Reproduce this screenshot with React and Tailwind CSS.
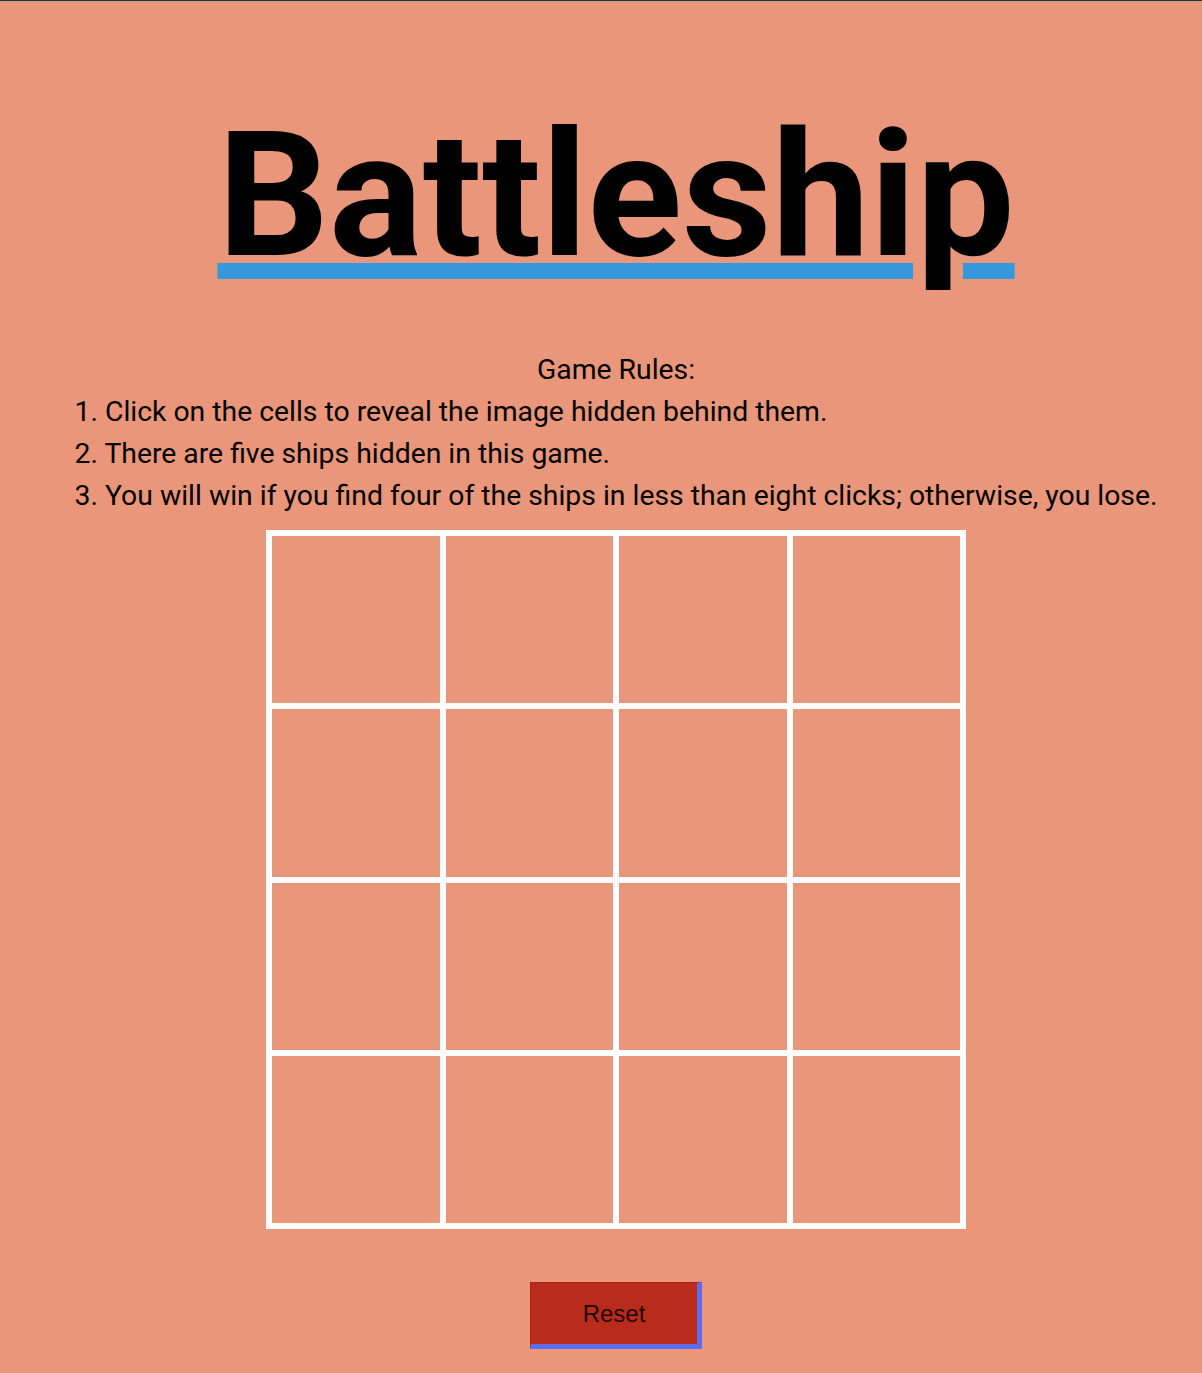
import React, { useState } from 'react';

const rules = [
  '1. Click on the cells to reveal the image hidden behind them.',
  '2. There are five ships hidden in this game.',
  '3. You will win if you find four of the ships in less than eight clicks; otherwise, you lose.',
];

const App = () => {
  const [revealed, setRevealed] = useState(Array(16).fill(false));

  const reveal = (i) => {
    const next = [...revealed];
    next[i] = true;
    setRevealed(next);
  };

  return (
    <div className="min-h-screen bg-[#e9967a] border-t border-[#0b3a4c] font-['Roboto',sans-serif] text-black">
      <div className="pl-[30px] pt-[92px] pb-[24px] flex flex-col items-center">
        {/* Title */}
        <h1 className="text-[175px] font-bold leading-[206px] underline decoration-[#3498db] decoration-[16px] underline-offset-[8px]">
          Battleship
        </h1>

        {/* Rules */}
        <div className="mt-[50px] text-[28.35px] leading-[42px]">
          <p className="text-center">Game Rules:</p>
          {rules.map((rule) => (
            <p key={rule}>{rule}</p>
          ))}
        </div>

        {/* Board */}
        <div className="mt-[13px] w-[700px] h-[699px] bg-white p-[6px] grid grid-cols-4 grid-rows-4 gap-[6px]">
          {revealed.map((r, i) => (
            <button
              key={i}
              onClick={() => reveal(i)}
              className={r ? 'bg-[#3498db]' : 'bg-[#e9967a]'}
            />
          ))}
        </div>

        <button
          onClick={() => setRevealed(Array(16).fill(false))}
          className="mt-[53px] w-[172px] h-[67px] bg-[#b92b1b] border-t border-l border-[#a8231a] border-r-[5px] border-b-[5px] border-r-[#5b6cf2] border-b-[#5b6cf2] font-['Liberation_Sans',Arial,sans-serif] text-[24px] text-[#1c0a06]"
        >
          Reset
        </button>
      </div>
    </div>
  );
};

export default App;
